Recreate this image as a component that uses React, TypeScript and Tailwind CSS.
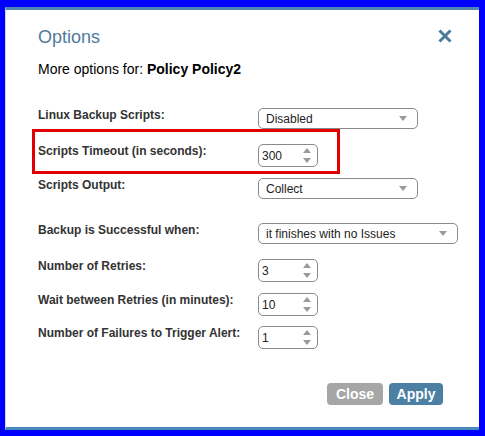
import React from 'react';

function SelectBox({ value, width }: { value: string; width: string }) {
  return (
    <div className={`${width} shrink-0 h-[21px] flex items-center justify-between rounded-[5px] border border-[#8a8a8a] bg-white pl-[7px] pr-[10px]`}>
      <span className="text-[12px] text-[#222] leading-none">{value}</span>
      <svg width="8" height="5" viewBox="0 0 8 5">
        <path d="M0 0 L8 0 L4 5 Z" fill="#9a9a9a" />
      </svg>
    </div>
  );
}

function NumberBox({ value }: { value: string }) {
  return (
    <div className="w-[60px] shrink-0 h-[23px] flex items-center justify-between rounded-[5px] border border-[#8a8a8a] bg-white pl-[3px] pr-[6px]">
      <span className="text-[12px] text-[#222] leading-none">{value}</span>
      <svg width="8" height="15" viewBox="0 0 8 15">
        <path d="M0 5 L8 5 L4 0 Z" fill="#9a9a9a" />
        <path d="M0 10 L8 10 L4 15 Z" fill="#9a9a9a" />
      </svg>
    </div>
  );
}

function Row({ label, children, mt }: { label: string; children: React.ReactNode; mt: string }) {
  return (
    <div className={`flex items-start ${mt}`}>
      <div className="w-[220px] shrink-0 text-[12px] font-bold leading-[15px] text-[#333]">{label}</div>
      {children}
    </div>
  );
}

export default function App() {
  return (
    <div className="h-[436px] w-[485px] bg-[#0000ff] pt-[7px] pl-[5px] pr-[6px] pb-[6px] font-['Liberation_Sans',Arial,sans-serif]">
      <div className="relative h-full bg-white border-t-[3px] border-b-[3px] border-t-[#4f87b2] border-b-[#4a89bd] border-l border-l-[#c8dcec] pl-[32px] pr-[27px]">
        {/* Header */}
        <div className="flex items-center justify-between pt-[16px]">
          <h1 className="text-[18px] leading-[22px] text-[#4e7b9a]">Options</h1>
          <svg width="14" height="14" viewBox="0 0 14 14" className="-mt-[2px]">
            <path d="M1.5 1.5 L12.5 12.5 M12.5 1.5 L1.5 12.5" stroke="#4e7b9a" strokeWidth="3" />
          </svg>
        </div>
        <div className="mt-[13px] text-[14px] leading-[16px] text-black">
          More options for: <span className="font-bold">Policy Policy2</span>
        </div>

        {/* Form */}
        <div className="flex flex-col">
          <Row label="Linux Backup Scripts:" mt="mt-[31px]">
            <SelectBox value="Disabled" width="w-[160px]" />
          </Row>
          <Row label="Scripts Timeout (in seconds):" mt="mt-[15px]">
            <NumberBox value="300" />
          </Row>
          <Row label="Scripts Output:" mt="mt-[11px]">
            <SelectBox value="Collect" width="w-[160px]" />
          </Row>
          <Row label="Backup is Successful when:" mt="mt-[24px]">
            <SelectBox value="it finishes with no Issues" width="w-[200px]" />
          </Row>
          <Row label="Number of Retries:" mt="mt-[15px]">
            <NumberBox value="3" />
          </Row>
          <Row label="Wait between Retries (in minutes):" mt="mt-[11px]">
            <NumberBox value="10" />
          </Row>
          <Row label="Number of Failures to Trigger Alert:" mt="mt-[10px]">
            <NumberBox value="1" />
          </Row>
        </div>

        {/* Buttons */}
        <div className="mt-[34px] flex justify-end gap-[6px] pr-[9px]">
          <button className="h-[22px] w-[56px] rounded-[4px] bg-[#a6a6a6] text-[14px] font-bold text-white">Close</button>
          <button className="h-[22px] w-[54px] rounded-[4px] bg-[#4b7fa3] text-[14px] font-bold text-white">Apply</button>
        </div>

        {/* Annotation highlight */}
        <div className="absolute left-[26px] top-[119px] h-[45px] w-[308px] border-[3px] border-[#e00000]" />
      </div>
    </div>
  );
}
